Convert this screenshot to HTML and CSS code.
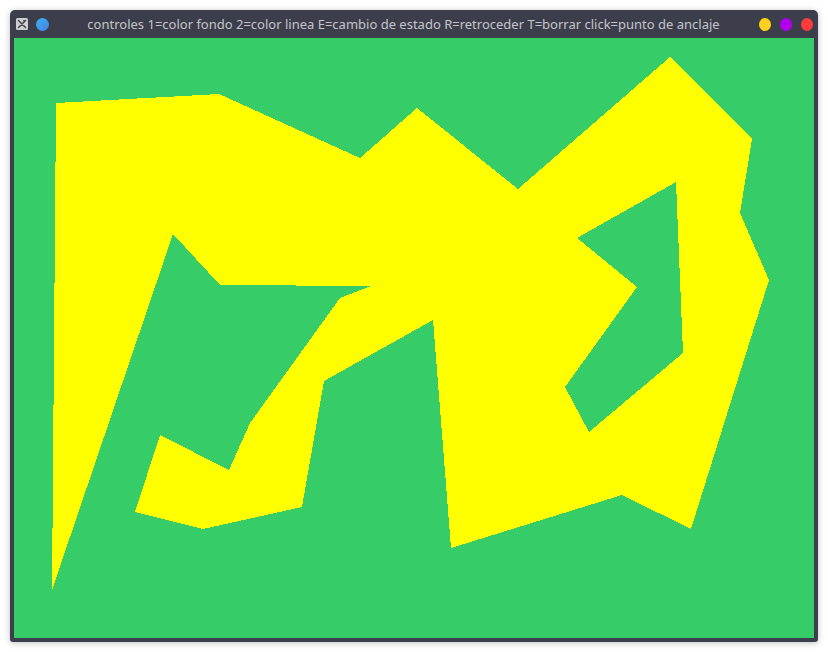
FILE: index.html
```html
<!DOCTYPE html>
<html lang="es">
<head>
<meta charset="utf-8">
<title>controles</title>
<link rel="stylesheet" href="styles.css">
</head>
<body>
<div class="window">
  <div class="titlebar">
    <div class="left-controls">
      <svg class="app-icon" width="12" height="12" viewBox="0 0 12 12">
        <rect x="0" y="0" width="12" height="12" rx="1.5" fill="#cfcfd2"/>
        <path d="M2.5 2.5 L9.5 9.5 M9.5 2.5 L2.5 9.5" stroke="#4a4a52" stroke-width="1.6" stroke-linecap="round"/>
        <path d="M7 2.5 L9.5 2.5" stroke="#4a4a52" stroke-width="1"/>
      </svg>
      <span class="dot dot-blue"></span>
    </div>
    <div class="title">controles 1=color fondo 2=color linea E=cambio de estado R=retroceder T=borrar click=punto de anclaje</div>
    <div class="right-controls">
      <span class="dot dot-yellow"></span>
      <span class="dot dot-purple"></span>
      <span class="dot dot-red"></span>
    </div>
  </div>
  <div class="canvas">
    <svg width="800" height="600" viewBox="14 38 800 600" shape-rendering="crispEdges">
      <path fill="#ffff00" fill-rule="evenodd" d="M56 103 L219 94 L360 158 L417 108 L518 189 L670 57 L752 139 L740 213 L769 280 L691 529 L622 495 L451 548 L433 320 L324 381 L302 507 L203 529 L135 512 L160 435 L229 470 L250 423 L340 298 L371 286 L220 285 L173 234 L52 590 Z M577 238 L676 182 L683 353 L589 432 L565 387 L637 287 Z"/>
    </svg>
  </div>
</div>
</body>
</html>
```
FILE: styles.css
```css
html, body {
  margin: 0;
  padding: 0;
  background: #ffffff;
}
body {
  width: 828px;
  height: 652px;
  overflow: hidden;
}
.window {
  margin: 10px 0 0 10px;
  width: 808px;
  background: #3c3e4b;
  border-radius: 5px 5px 3px 3px;
  box-shadow: 0 1px 6px rgba(0, 0, 0, 0.25);
  padding: 0 4px 4px 4px;
  box-sizing: border-box;
}
.titlebar {
  height: 28px;
  display: flex;
  align-items: center;
  margin: 0 -4px;
  padding: 0 5px;
}
.left-controls {
  display: flex;
  align-items: center;
  gap: 8px;
  width: 40px;
  padding-left: 1px;
}
.app-icon {
  display: block;
}
.right-controls {
  display: flex;
  align-items: center;
  gap: 9px;
  width: 54px;
  justify-content: flex-end;
}
.title {
  flex: 1;
  text-align: center;
  font-family: "Noto Sans", "Open Sans", sans-serif;
  font-size: 13px;
  color: #c4c5cb;
  white-space: nowrap;
  padding-right: 8px;
}
.dot {
  display: block;
  width: 13px;
  height: 13px;
  border-radius: 50%;
}
.dot-blue {
  background: linear-gradient(135deg, #37b4f2, #4a7fe0);
}
.dot-yellow {
  background: #ffd11a;
}
.dot-purple {
  background: #b200ee;
}
.dot-red {
  background: #ff3b3b;
}
.canvas {
  width: 800px;
  height: 600px;
  background: #36cd69;
}
.canvas svg {
  display: block;
}
```
